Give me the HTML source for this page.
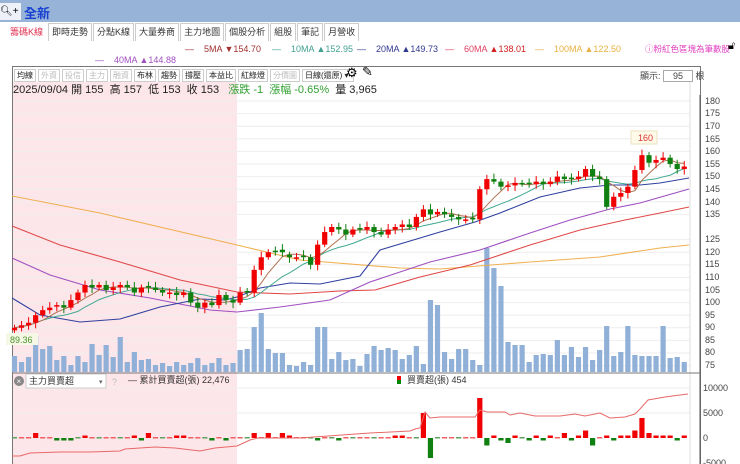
<!DOCTYPE html>
<html><head><meta charset="utf-8">
<style>
*{margin:0;padding:0;box-sizing:border-box}
body{width:740px;height:464px;overflow:hidden;background:#fff;font-family:"Liberation Sans","Noto Sans CJK TC",sans-serif;position:relative}
.top{position:absolute;left:0;top:0;width:740px;height:22px;background:#97b3d8}
.qi{position:absolute;left:0;top:3px;width:21px;height:17px;background:#eef2f8;font-size:10px;line-height:17px;color:#000;white-space:nowrap;overflow:hidden}
.new{position:absolute;left:24px;top:3px;font-size:13px;font-weight:bold;color:#1840d0}
.tabs{position:absolute;left:6px;top:23px;height:18px;display:flex}
.tab{font-size:9px;line-height:16px;height:18px;padding:0 3px;border:1px solid #ccc;border-bottom:none;color:#333;background:#fff;margin-right:1px;white-space:nowrap}
.tab.a{color:#e03050;border-color:#fff}
.lg{position:absolute;font-size:9px;white-space:nowrap}
.box{position:absolute;left:12px;top:66px;width:689px;height:398px;border:1px solid #777;border-bottom:none}
.tb{position:absolute;left:14px;top:69px;display:flex;font-size:8px;white-space:nowrap}
.tb span{border:1px solid #ccc;padding:0 2px;margin-right:2px;line-height:11px;height:13px;color:#222;background:#fff}
.tb span.g{color:#bbb}
</style></head><body>
<div class="top"></div>
<div class="qi">🔍︎+</div>
<div class="new">全新</div>
<div class="tabs">
<div class="tab a">籌碼K線</div><div class="tab">即時走勢</div><div class="tab">分點K線</div><div class="tab">大量券商</div><div class="tab">主力地圖</div><div class="tab">個股分析</div><div class="tab">組股</div><div class="tab">筆記</div><div class="tab">月營收</div>
</div>
<div class="lg" style="left:185px;top:44px;color:#a03030">—&nbsp;&nbsp;&nbsp; 5MA ▼154.70</div>
<div class="lg" style="left:272px;top:44px;color:#40a090">—&nbsp;&nbsp;&nbsp; 10MA ▲152.95</div>
<div class="lg" style="left:357px;top:44px;color:#303890">—&nbsp;&nbsp;&nbsp; 20MA ▲149.73</div>
<div class="lg" style="left:445px;top:44px;color:#e04060">—&nbsp;&nbsp;&nbsp; 60MA <span style="color:#d02020">▲138.01</span></div>
<div class="lg" style="left:535px;top:44px;color:#e8b040">—&nbsp;&nbsp;&nbsp; 100MA ▲122.50</div>
<div class="lg" style="left:645px;top:43px;color:#e040c0;font-size:8.5px">ⓘ粉紅色區塊為筆數股</div>
<div class="lg" style="left:728px;top:40px;font-size:11px;color:#000">🔓︎</div>
<div class="lg" style="left:95px;top:55px;color:#a050c0">—&nbsp;&nbsp;&nbsp; 40MA ▲144.88</div>
<div class="box"></div>
<div class="tb"><span>均線</span><span class="g">外資</span><span class="g">投信</span><span class="g">主力</span><span class="g">融資</span><span>布林</span><span>趨勢</span><span>撐壓</span><span>本益比</span><span>紅綠燈</span><span class="g">分價圖</span><span style="width:52px">日線(還原) ▾</span></div>
<div class="lg" style="left:346px;top:65px;font-size:13px">⚙︎</div>
<div class="lg" style="left:362px;top:64px;font-size:13px">✎</div>
<div class="lg" style="left:640px;top:69px;color:#444">顯示: <span style="display:inline-block;border:1px solid #aaa;width:30px;text-align:center">95</span> 根</div>
<svg style="position:absolute;left:0;top:0" width="740" height="464" id="sv">
<rect x="13" y="82" width="224" height="382" fill="#fde6ea"/>
<g stroke="#eee" stroke-width="1" id="grid"></g>
<line x1="690" y1="82" x2="690" y2="464" stroke="#ddd"/>
<line x1="700" y1="95" x2="700" y2="464" stroke="#555"/>
<line x1="13" y1="373" x2="700" y2="373" stroke="#777"/>
<g id="vol"></g>
<polyline fill="none" stroke="#f0b050" stroke-width="1.1" points="12,196 100,213 237,245 300,260 400,268 440,269 530,262 600,257 660,248 689,245"/>
<polyline fill="none" stroke="#e04848" stroke-width="1.1" points="12,226 60,245 120,262 180,280 237,292 290,294 340,291 375,290 420,277 470,265 530,245 580,230 625,220 660,213 689,207"/>
<polyline fill="none" stroke="#a050c0" stroke-width="1.1" points="12,258 50,275 100,290 150,298 210,310 237,312 280,307 330,300 370,282 430,262 480,250 530,233 570,220 610,209 640,203 689,189"/>
<polyline fill="none" stroke="#3040a0" stroke-width="1.1" points="12,298 40,315 80,322 120,319 160,307 200,299 225,300 237,297 260,288 290,283 320,284 360,276 380,250 420,238 440,232 475,222 500,213 540,197 580,188 610,185 640,185 660,183 689,178"/>
<g id="ma"></g>
<g id="cd"></g>
<g id="low"></g>
<polyline fill="none" stroke="#e86868" stroke-width="1" points="12,456 20,456 30,453 60,452 90,452 120,451 125,449 155,447 175,448 200,451 215,448 237,446 250,440 258,438 300,438 370,433 410,431 415,429 420,428 425,412 430,418 440,417 475,417 480,410 487,412 505,412 510,415 520,413 535,416 560,416 575,414 585,416 600,413 610,418 625,417 635,414 640,409 648,400 665,397 680,395 688,394"/>
<rect x="631" y="131" width="26" height="13" fill="#fffbe8" stroke="#e8e0c0"/>
<text x="638" y="141" font-size="9" fill="#e03030">160</text>
<rect x="6" y="333" width="32" height="12" fill="#f4f8e4"/>
<text x="10" y="343" font-size="9" fill="#509030">89.36</text>
<g font-size="9" fill="#444">
<text x="705" y="104">180</text><text x="705" y="116">175</text><text x="705" y="129">170</text><text x="705" y="142">165</text><text x="705" y="154">160</text><text x="705" y="167">155</text><text x="705" y="179">150</text><text x="705" y="192">145</text><text x="705" y="205">140</text><text x="705" y="217">135</text><text x="705" y="242">125</text><text x="705" y="255">120</text><text x="705" y="267">115</text><text x="705" y="280">110</text><text x="705" y="293">105</text><text x="705" y="305">100</text><text x="705" y="318">95</text><text x="705" y="330">90</text><text x="705" y="343">85</text><text x="705" y="355">80</text><text x="705" y="368">75</text>
<text x="703" y="391">10000</text><text x="703" y="416">5000</text><text x="703" y="441">0</text><text x="703" y="466">-5000</text>
</g>
<circle cx="19" cy="381" r="5" fill="#888"/><text x="16.5" y="384" font-size="8" fill="#fff">×</text>
<rect x="26" y="374" width="80" height="14" fill="#fff" stroke="#ccc"/>
<text x="29" y="384" font-size="9" fill="#333">主力買賣超</text><text x="99" y="384" font-size="7" fill="#666">▾</text>
<text x="112" y="385" font-size="9" fill="#bbb">?</text>
<text x="128" y="383" font-size="9" fill="#333">— 累計買賣超(張) 22,476</text>
<rect x="397" y="376" width="4" height="4" fill="#e00"/><rect x="397" y="380" width="4" height="4" fill="#080"/>
<text x="407" y="383" font-size="9" fill="#333">買賣超(張) 454</text>
</svg>
<div style="position:absolute;left:13px;top:81px;font-size:11px;color:#222;white-space:nowrap">2025/09/04 開 155&nbsp; 高 157&nbsp; 低 153&nbsp; 收 153&nbsp;&nbsp; <span style="color:#30a030">漲跌 -1&nbsp; 漲幅 -0.65%</span>&nbsp; 量 3,965</div>
<script>
var SP=7.05,X0=14.5;
var C=[90,91,92,95,97,98,99,98,101,104,107,106,107,105,106,107,106,104,106,106,105,104,104,103,104,100,98,100,99,103,101,100,104,104,113,118,120,120,120,118,118,118,115,123,128,130,129,127,129,129,130,128,127,129,130,131,130,134,137,135,136,135,134,133,133,133,145,149,148,146,146.5,147.5,147,147,148,147,148,150,149,149,150,153,150,149,138,142,143.5,146,152.6,158.5,155.5,156.6,157.5,155,153,154];
var O=[89,90,91,92,95,97,99,99,98,101,104,107,106,107,105,106,107,106,104,106,106,105,104,104,103,104,100,98,100,99,103,101,100,104,104,113,118,120,121,119,118,118,118,115,123,128,130,129,127,129,129,130,128,127,129,130,131,130,134,137,135,136,135,134,133,133,133,145,149,148,146,146.5,147.5,147,147,148,147,148,150,149,149,150,153,150,149,138,142,143.5,146,152.6,158.5,155.5,156.6,157.5,155,153];
var V=[356,362,357,336,349,346,360,356,365,356,362,344,355,345,357,337,362,352,360,359,365,363,366,362,365,363,358,365,363,358,365,363,350,349,327,313,349,353,353,365,366,362,365,327,327,359,352,360,359,366,354,346,350,348,350,359,355,346,364,300,305,352,359,349,349,360,365,248,268,286,342,345,345,362,355,354,355,340,355,347,357,347,360,350,326,356,352,326,355,356,356,356,326,358,357,362];
function Y(p){return 101+(180-p)*2.52}
var s='',v='',ma='',g='';
[180,175,170,165,160,155,150,145,140,135,125,120,115,110,105,100,95,90,85,80,75].forEach(function(p){g+='<line x1="13" x2="690" y1="'+Y(p)+'" y2="'+Y(p)+'"/>'});
g+='<line x1="13" x2="690" y1="413" y2="413"/><line x1="13" x2="690" y1="388" y2="388"/>';
document.getElementById('grid').innerHTML=g;
for(var i=0;i<C.length;i++){
 var x=X0+i*SP,c=C[i],o=O[i]!==undefined?O[i]:c;
 if(Math.abs(c-o)<0.4)o=c+(i%2?0.6:-0.6);
 var up=c>=o,col=up?'#f00000':'#108010';
 var hi=Math.max(c,o)+1.2+(i%3)*0.5,lo=Math.min(c,o)-1-(i%4)*0.4;
 s+='<line x1="'+x+'" x2="'+x+'" y1="'+Y(hi)+'" y2="'+Y(lo)+'" stroke="'+col+'"/>';
 var t=Y(Math.max(c,o)),h=Math.max(1.5,Math.abs(c-o)*2.52);
 s+='<rect x="'+(x-2.6)+'" y="'+t+'" width="5.2" height="'+h+'" fill="'+col+'"/>';
 v+='<rect x="'+(x-2.6)+'" y="'+V[i]+'" width="5.2" height="'+(372-V[i])+'" fill="#90b0d8"/>';
}
function maP(n,col){var p=[];for(var i=0;i<C.length;i++){var a=0,k=0;for(var j=Math.max(0,i-n+1);j<=i;j++){a+=C[j];k++}p.push((X0+i*SP).toFixed(1)+','+Y(a/k).toFixed(1))}return '<polyline fill="none" stroke="'+col+'" stroke-width="1" points="'+p.join(' ')+'"/>'}
ma=maP(10,'#40a890')+maP(5,'#b07050');
document.getElementById('cd').innerHTML=s;
document.getElementById('vol').innerHTML=v;
document.getElementById('ma').innerHTML=ma;
var B=[0,0,0,2,0,0,-1,-1,-1,0,1,0,0,0,0,0,0,1,-1,2,0,0,0,1,1,0,0,0,-1,0,-1,0,0,0,2,0,2,0,2,1,0,0,0,-1,0,0,-1,0,0,0,0,0,0,0,1,1,0,0,10,-8,0,0,0,0,0,0,16,-3,1,-1,-2,1,0,-1,1,-1,1,0,2,-1,1,3,-3,0,1,-1,1,1,3,8,2,1,1,1,-1,1];
var L='';
for(var i=0;i<B.length;i++){var x=X0+i*SP,b=B[i]*2.5;var col=b>=0?'#f00000':'#108010';
 if(b==0)L+='<rect x="'+(x-2.6)+'" y="437" width="5.2" height="1.5" fill="'+(i%3?'#f06060':'#60a060')+'"/>';
 else L+='<rect x="'+(x-2.6)+'" y="'+(b>0?438-b:438)+'" width="5.2" height="'+Math.abs(b)+'" fill="'+col+'"/>';}
document.getElementById('low').innerHTML=L;
</script>
</body></html>
